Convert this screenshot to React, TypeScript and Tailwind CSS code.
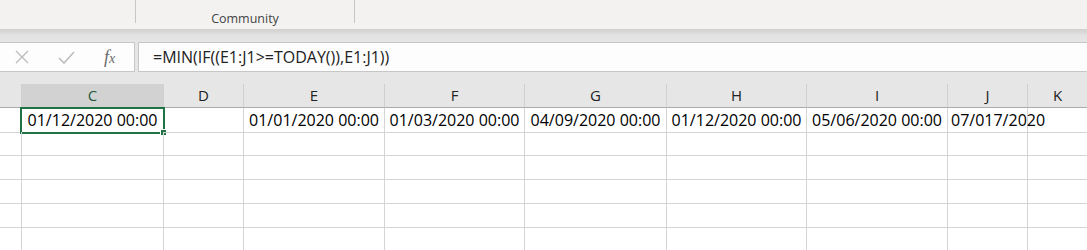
import React from "react";

const letters = ["", "C", "D", "E", "F", "G", "H", "I", "J", "K"];
const row1 = [
  "",
  "01/12/2020 00:00",
  "",
  "01/01/2020 00:00",
  "01/03/2020 00:00",
  "04/09/2020 00:00",
  "01/12/2020 00:00",
  "05/06/2020 00:00",
  "",
  "",
];

const ui = { fontFamily: '"Open Sans", "Noto Sans", sans-serif' };

export default function App() {
  const gridCols =
    "grid grid-cols-[22px_142px_80px_141px_140px_142px_140px_141px_80px_1fr]";
  return (
    <div className="w-[1087px] h-[250px] overflow-hidden bg-[#e6e6e6] flex flex-col" style={ui}>
      {/* ribbon */}
      <div className="h-[29px] bg-[#f3f2f1] flex items-start shrink-0">
        <div className="w-[136px] h-[23px] border-r border-[#c8c6c4]" />
        <div className="w-[219px] h-[23px] border-r border-[#c8c6c4] relative">
          <span className="absolute left-0 right-0 top-[11px] text-center text-[12.5px] leading-[16px] text-[#444]">
            Community
          </span>
        </div>
      </div>
      <div className="h-[13px] shrink-0 bg-gradient-to-b from-[#d2d0ce] via-[#e3e3e3] to-[#e6e6e6]" />
      {/* formula bar */}
      <div className="h-[30px] flex shrink-0">
        <div className="w-[135px] border-y border-r border-[#c6c6c6] bg-[#fdfdfd] flex items-center">
          <svg className="ml-[15px]" width="14" height="14" viewBox="0 0 14 14">
            <path d="M1 1 L13 13 M13 1 L1 13" stroke="#bdbdbd" strokeWidth="1.4" fill="none" />
          </svg>
          <svg className="ml-[29px]" width="17" height="13" viewBox="0 0 17 13">
            <path d="M1 7 L6 12 L16 1" stroke="#bdbdbd" strokeWidth="1.6" fill="none" />
          </svg>
          <span
            className="ml-[29px] text-[18px] italic text-[#6b6b6b] leading-none"
            style={{ fontFamily: '"Liberation Serif", serif' }}
          >
            f<span className="text-[14px]">x</span>
          </span>
        </div>
        <div className="w-[3px]" />
        <div className="flex-1 border-y border-l border-[#c6c6c6] bg-[#fdfdfd] flex items-center pl-[14px]">
          <span className="text-[16px] text-[#222]">=MIN(IF((E1:J1&gt;=TODAY()),E1:J1))</span>
        </div>
      </div>
      <div className="h-[12px] shrink-0" />
      {/* header row */}
      <div className={`${gridCols} h-[24px] shrink-0`}>
        {letters.map((l, i) => (
          <div
            key={i}
            className={`border-b border-[#ababab] flex items-center justify-center text-[15px] ${
              i < letters.length - 1 ? "border-r border-r-[#d0d0d0]" : ""
            } ${l === "C" ? "bg-[#d2d2d2] text-[#1e5c38]" : "text-[#222]"}`}
          >
            {l}
          </div>
        ))}
      </div>
      {/* body */}
      <div className="bg-white flex-1">
        {[0, 1, 2, 3, 4, 5].map((r) => (
          <div key={r} className={`${gridCols} h-[24px]`}>
            {letters.map((_, i) => (
              <div
                key={i}
                className={`relative border-b border-[#d4d4d4] ${
                  i < letters.length - 1 ? "border-r" : ""
                } flex items-center ${i === 8 ? "justify-start" : "justify-center"}`}
              >
                {r === 0 && i === 8 ? (
                  <span className="absolute left-[3px] text-[16px] text-black whitespace-nowrap">07/017/2020</span>
                ) : r === 0 && row1[i] ? (
                  <span className="text-[16px] text-black whitespace-nowrap">{row1[i]}</span>
                ) : null}
                {r === 0 && i === 1 && (
                  <>
                    <div className="absolute left-[-2px] top-[-1px] right-[-2px] bottom-[-2px] border-2 border-[#217346]" />
                    <div className="absolute right-[-4px] bottom-[-4px] w-[7px] h-[7px] bg-[#217346] border border-white" />
                  </>
                )}
              </div>
            ))}
          </div>
        ))}
      </div>
    </div>
  );
}
